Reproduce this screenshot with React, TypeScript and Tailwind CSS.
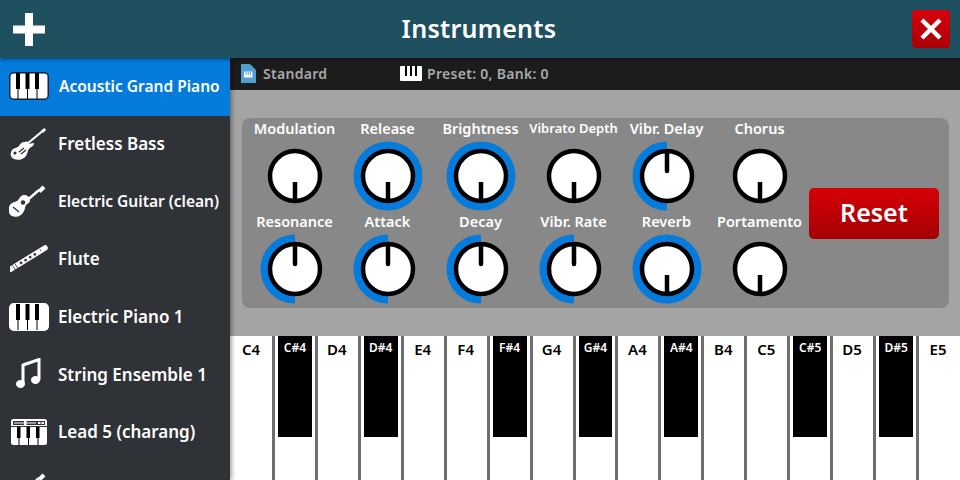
const font = { fontFamily: '"Noto Sans", sans-serif' };

const Piano = ({ dark = false }: { dark?: boolean }) => (
  <svg width="40" height="28" viewBox="0 0 40 28">
    <rect x="0.75" y="0.75" width="38.5" height="26.5" rx="4" fill="#fff" stroke={dark ? "#0b2540" : "#fff"} strokeWidth="1.5" />
    <rect x="7" y="1" width="4" height="16" fill="#000" />
    <rect x="16.5" y="1" width="4" height="16" fill="#000" />
    <rect x="26" y="1" width="4" height="16" fill="#000" />
    <rect x="8.500" y="17" width="1" height="10" fill="#000" />
    <rect x="18" y="17" width="1" height="10" fill="#000" />
    <rect x="27.500" y="17" width="1" height="10" fill="#000" />
  </svg>
);

const Bass = () => (
  <svg width="40" height="34" viewBox="0 0 40 34">
    <path d="M18 17 L33 4.500" stroke="#fff" strokeWidth="2.200" />
    <path d="M32 3.500l3.500-2.500 1.500 2-3 3z" fill="#fff" />
    <path d="M17 14c2 1 2 2 2 3l6-1c0 3-3 4-4 5-2 1-2 3-3 6-2 5-8 7-13 5-4-2-4-6-2-9 2-2 5-2 7-4 1-2 3-4 5-4 1 0 2 0 2-1z" fill="#fff" />
    <circle cx="6" cy="26" r="1.600" fill="#2f3236" />
    <path d="M10 25l5-4M12 27l5-4" stroke="#2f3236" strokeWidth="1.300" />
  </svg>
);

const Guitar = () => (
  <svg width="40" height="34" viewBox="0 0 40 34">
    <path d="M15 19 L30 6" stroke="#fff" strokeWidth="2.400" />
    <path d="M29 6l4.500-4.500 3 3-5 4.500z" fill="#fff" />
    <path d="M15 11c3 0 6 2 6 5 0 3-3 4-4 5-1 2-1 4-2 6-2 5-8 7-12 5-4-2-4-8-2-11 2-3 5-3 7-4 2-1 3-6 7-6z" fill="#fff" />
    <circle cx="14" cy="18.500" r="2.200" fill="#2f3236" />
    <path d="M4 23l6 5" stroke="#2f3236" strokeWidth="1.300" />
  </svg>
);

const Flute = () => (
  <svg width="38" height="30" viewBox="0 0 38 30">
    <path d="M1 25 L35 4" stroke="#fff" strokeWidth="5.500" strokeLinecap="round" />
    <path d="M2.500 21.500l3 4.500M5 20l3 4.500" stroke="#2f3236" strokeWidth="0.900" />
    <path d="M10 19.500 L27 9" stroke="#2f3236" strokeWidth="2.400" strokeDasharray="2.400 3" />
    <path d="M31 7l-1-1.500" stroke="#2f3236" strokeWidth="1" />
  </svg>
);

const Note = () => (
  <svg width="28" height="32" viewBox="0 0 28 32">
    <path d="M8 7 L24 1.500 V22" stroke="#fff" strokeWidth="3" fill="none" />
    <path d="M8 6 V26" stroke="#fff" strokeWidth="3" />
    <ellipse cx="5.500" cy="26" rx="4.500" ry="4" fill="#fff" />
    <ellipse cx="20.500" cy="22" rx="4.500" ry="4" fill="#fff" />
  </svg>
);

const Synth = () => (
  <svg width="36" height="26" viewBox="0 0 36 26">
    <rect width="36" height="26" rx="2.500" fill="#fff" />
    <rect x="2" y="2" width="32" height="4" fill="#2f3236" />
    <rect x="3" y="3.500" width="22" height="1" fill="#fff" />
    <rect x="13" y="1.500" width="2.500" height="5" fill="#fff" />
    <rect x="27" y="3" width="2.500" height="2" fill="#fff" />
    <rect x="30.500" y="3" width="2.500" height="2" fill="#fff" />
    <rect x="0" y="7" width="36" height="1" fill="#2f3236" />
    <rect x="6" y="8" width="3.500" height="11" fill="#000" />
    <rect x="15.500" y="8" width="3.500" height="11" fill="#000" />
    <rect x="25" y="8" width="3.500" height="11" fill="#000" />
    <rect x="7.500" y="19" width="1" height="7" fill="#000" />
    <rect x="17" y="19" width="1" height="7" fill="#000" />
    <rect x="26.500" y="19" width="1" height="7" fill="#000" />
  </svg>
);

const polar = (cx: number, cy: number, r: number, deg: number) => {
  const a = (deg * Math.PI) / 180;
  return `${cx + r * Math.sin(a)} ${cy - r * Math.cos(a)}`;
};

type KnobKind = "none" | "half" | "full";

const Knob = ({ label, kind }: { label: string; kind: KnobKind }) => {
  const up = kind === "half";
  return (
    <div className="w-[93px] h-[93px] flex flex-col items-center shrink-0">
      <div className={`h-[22px] leading-[20px] font-semibold text-white whitespace-nowrap ${label === "Vibrato Depth" ? "text-[13px]" : "text-[14.5px]"}`} style={font}>{label}</div>
      <svg width="70" height="70" viewBox="0 0 70 70" className="mt-[1px]">
        {kind === "full" && <circle cx="35" cy="35" r="30.500" fill="none" stroke="#057bdc" strokeWidth="8" />}
        {kind === "half" && (
          <path d={`M ${polar(35, 35, 30.5, 180)} A 30.5 30.5 0 0 1 ${polar(35, 35, 30.5, 360)}`} fill="none" stroke="#057bdc" strokeWidth="8" />
        )}
        <circle cx="35" cy="35" r="25" fill="#fff" stroke="#000" strokeWidth="4.500" />
        {up ? (
          <line x1="35" y1="12" x2="35" y2="30" stroke="#000" strokeWidth="4.500" strokeLinecap="round" />
        ) : (
          <line x1="35" y1="41" x2="35" y2="58" stroke="#000" strokeWidth="4.500" />
        )}
      </svg>
    </div>
  );
};

const row1: [string, KnobKind][] = [
  ["Modulation", "none"], ["Release", "full"], ["Brightness", "full"],
  ["Vibrato Depth", "none"], ["Vibr. Delay", "half"], ["Chorus", "none"],
];
const row2: [string, KnobKind][] = [
  ["Resonance", "half"], ["Attack", "half"], ["Decay", "half"],
  ["Vibr. Rate", "half"], ["Reverb", "full"], ["Portamento", "none"],
];

const items = [
  { name: "Acoustic Grand Piano", icon: <Piano dark />, active: true, small: true },
  { name: "Fretless Bass", icon: <Bass /> },
  { name: "Electric Guitar (clean)", icon: <Guitar />, small: true },
  { name: "Flute", icon: <Flute /> },
  { name: "Electric Piano 1", icon: <Piano /> },
  { name: "String Ensemble 1", icon: <Note /> },
  { name: "Lead 5 (charang)", icon: <Synth /> },
  { name: "", icon: <Guitar /> },
];

const keys = ["C4", "C#4", "D4", "D#4", "E4", "F4", "F#4", "G4", "G#4", "A4", "A#4", "B4", "C5", "C#5", "D5", "D#5", "E5"];

export default function App() {
  return (
    <div className="w-[960px] h-[480px] overflow-hidden flex flex-col bg-[#a4a4a4]" style={font}>
      <header className="h-[58px] shrink-0 bg-[#1f505f] flex items-center justify-between pl-[13px] pr-[10px] relative z-10 shadow-[0_1px_4px_rgba(0,0,0,0.5)]">
        <svg width="32" height="33" viewBox="0 0 32 33"><path d="M12 0h8v12.500h12v8H20V33h-8V20.500H0v-8h12z" fill="#fff" /></svg>
        <h1 className="text-[25px] font-semibold text-white tracking-[0.3px] ml-[1px] mb-[1px]">Instruments</h1>
        <button className="w-[38px] h-[38px] rounded-[4px] bg-gradient-to-b from-[#d8000c] to-[#a80008] flex items-center justify-center">
          <svg width="22" height="22" viewBox="0 0 22 22"><path d="M2 2l18 18M20 2L2 20" stroke="#fff" strokeWidth="4.400" /></svg>
        </button>
      </header>
      <div className="flex flex-1 min-h-0">
        <aside className="w-[230px] shrink-0 bg-[#2f3236] overflow-hidden relative z-[5] shadow-[2px_0_4px_rgba(0,0,0,0.35)]">
          {items.map((it) => (
            <div key={it.name || "more"} className={`h-[57.6px] flex items-center pb-[1px] ${it.active ? "bg-[#057bdc]" : ""}`}>
              <div className="w-[58px] flex justify-center shrink-0">{it.icon}</div>
              <span className={`font-semibold text-white whitespace-nowrap ${it.small ? "text-[15.5px]" : "text-[17px]"} ${it.active ? "ml-[1px]" : ""}`}>{it.name}</span>
            </div>
          ))}
        </aside>
        <main className="flex-1 min-w-0 flex flex-col">
          <div className="h-[32px] shrink-0 bg-[#1c1c1c] flex items-center pl-[10px] pb-[1px] text-[14px] font-semibold text-[#a9a9a9] tracking-[0.3px]">
            <svg width="16" height="19" viewBox="0 0 16 19"><path d="M1 0h9l6 6v13H1z" fill="#4f9fd0" /><path d="M4 7.500h8.500v6H4z" fill="#fff" /><path d="M6 7.500v3.500M8.200 7.500v3.500M10.400 7.500v3.500" stroke="#4f9fd0" /></svg>
            <span className="ml-[7px] w-[137px]">Standard</span>
            <svg width="22" height="15" viewBox="0 0 22 15" className="mr-[5px]"><rect width="22" height="15" rx="1" fill="#fff" /><path d="M5 0h2v10H5zM10 0h2v10h-2zM15 0h2v10h-2z" fill="#000" /></svg>
            <span>Preset: 0, Bank: 0</span>
          </div>
          <div className="h-[246px] shrink-0 pl-[12px] pr-[11px] pt-[28px]">
            <div className="h-[190px] rounded-[8px] bg-[#888888] flex items-center pl-[6px]">
              <div className="w-[558px] shrink-0 mb-[4px]">
                <div className="flex">{row1.map(([l, k]) => <Knob key={l} label={l} kind={k} />)}</div>
                <div className="flex">{row2.map(([l, k]) => <Knob key={l} label={l} kind={k} />)}</div>
              </div>
              <button className="ml-[3px] w-[130px] h-[51px] rounded-[5px] bg-gradient-to-b from-[#d60006] to-[#a30005] text-white text-[25px] font-semibold">Reset</button>
            </div>
          </div>
          <div className="flex-1 min-h-0 bg-white pl-[2px] pr-[1px]">
            <div className="h-full grid grid-cols-[repeat(17,minmax(0,1fr))] gap-x-[3px] bg-[#6e6e6e]">
              {keys.map((k) => (
                <div key={k} className="bg-white relative">
                  {k.includes("#") ? (
                    <div className="absolute left-[3px] right-[3px] top-0 h-[101px] bg-black text-white text-[12px] font-semibold text-center leading-[24px]">{k}</div>
                  ) : (
                    <div className="text-black text-[15px] font-semibold text-center leading-[26px] pr-[2px]">{k}</div>
                  )}
                </div>
              ))}
            </div>
          </div>
        </main>
      </div>
    </div>
  );
}
